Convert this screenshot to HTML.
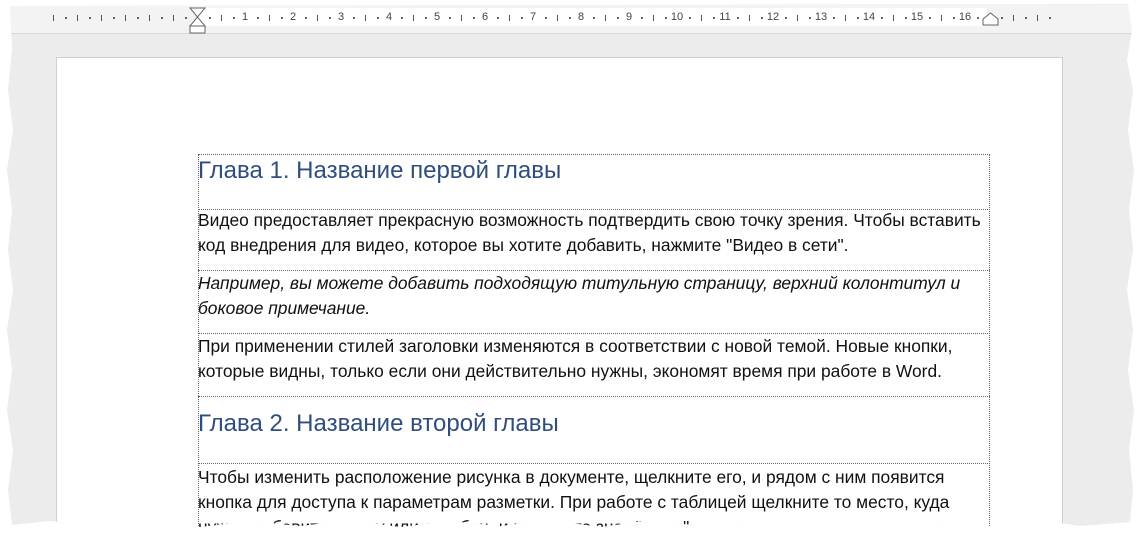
<!DOCTYPE html>
<html><head><meta charset="utf-8"><style>
html,body{margin:0;padding:0;background:#fff;width:1140px;height:540px;overflow:hidden}
#wrap{position:absolute;left:0;top:0;width:1140px;height:540px;background:#ececec;
clip-path:polygon(10px 6px,1128px 4px,1132px 30px,1127px 60px,1133px 90px,1128px 130px,1134px 170px,1129px 210px,1133px 250px,1127px 290px,1133px 330px,1128px 370px,1134px 410px,1129px 450px,1133px 490px,1130px 522px,1080px 526px,1040px 520px,1000px 527px,950px 521px,900px 526px,850px 520px,800px 527px,750px 521px,700px 526px,650px 520px,600px 527px,550px 520px,500px 526px,450px 521px,400px 527px,350px 520px,300px 526px,250px 521px,200px 527px,150px 520px,100px 526px,50px 521px,12px 525px,8px 490px,13px 450px,7px 410px,12px 370px,7px 330px,13px 290px,8px 250px,12px 210px,7px 170px,13px 130px,8px 90px,12px 50px)}
#ruler{position:absolute;left:0;top:5px;width:1140px;height:28px;background:#f3f3f3;border-bottom:1px solid #d8d8d8}
#rw{position:absolute;left:197px;top:8px;width:790px;height:18px;background:#fff}
.n{position:absolute;top:11px;font:11px "Liberation Sans",sans-serif;color:#444;transform:translateX(-50%)}
.b{position:absolute;top:15px;width:1px;height:6px;background:#555}
.d{position:absolute;top:17px;width:2px;height:2px;background:#666}
#page{position:absolute;left:56px;top:57px;width:1005px;height:500px;background:#fff;border:1px solid #d0d0d0}
.row{position:absolute;left:198px;width:792px;border-top:1px dotted #666;box-sizing:border-box}
.tb{position:absolute;left:198px;top:154px;width:792px;height:400px;border-left:1px dotted #666;border-right:1px dotted #666;box-sizing:border-box}
.h{font:24px "Liberation Sans","DejaVu Sans",sans-serif;color:#2f4e7e;white-space:nowrap;position:absolute;left:0}
.t{font:17.4px/25px "Liberation Sans","DejaVu Sans",sans-serif;color:#111;white-space:nowrap;position:absolute;left:0}
</style></head><body>
<div id="wrap">
<div id="ruler"></div>
<div id="rw"></div>
<div id="rl"></div>
<div id="page"></div>
<div class="tb"></div>
<div class="row" style="top:154px"><div class="h" style="top:2px">Глава 1. Название первой главы</div></div>
<div class="row" style="top:209px"><div class="t" style="top:-2px">Видео предоставляет прекрасную возможность подтвердить свою точку зрения. Чтобы вставить<br>код внедрения для видео, которое вы хотите добавить, нажмите "Видео в сети".</div></div>
<div class="row" style="top:270px"><div class="t" style="top:0px;font-style:italic">Например, вы можете добавить подходящую титульную страницу, верхний колонтитул и<br>боковое примечание.</div></div>
<div class="row" style="top:333px"><div class="t" style="top:0px">При применении стилей заголовки изменяются в соответствии с новой темой. Новые кнопки,<br>которые видны, только если они действительно нужны, экономят время при работе в Word.</div></div>
<div class="row" style="top:396px"><div class="h" style="top:13px">Глава 2. Название второй главы</div></div>
<div class="row" style="top:463px"><div class="t" style="top:1px">Чтобы изменить расположение рисунка в документе, щелкните его, и рядом с ним появится<br>кнопка для доступа к параметрам разметки. При работе с таблицей щелкните то место, куда<br>нужно добавить строку или столбец, и щелкните знак "плюс".</div></div>
<svg style="position:absolute;left:188px;top:7px" width="20" height="28"><path d="M2 1H17L9.5 10ZM9.5 10L2 19H17Z" fill="#fff" stroke="#666"/><rect x="2" y="19" width="15" height="7" fill="#fff" stroke="#666"/></svg>
<svg style="position:absolute;left:981px;top:11px" width="20" height="16"><path d="M2 14V8L9.5 2L17 8V14Z" fill="#fff" stroke="#666"/></svg>
</div>
<script>
var h='';
for(var k=-3;k<=18;k++){var x=197+48*k;
 if(k>=1&&k<=16)h+='<div class="n" style="left:'+x+'px">'+k+'</div>';
 else if(k!==0&&k<=17)h+='<div class="b" style="left:'+x+'px"></div>';
 [12,36].forEach(function(o){var xx=x+o;if(xx>50&&xx<1052&&Math.abs(xx-990)>6)h+='<div class="d" style="left:'+xx+'px"></div>';});
 if(x+24>50&&x+24<1052&&Math.abs(x+24-990)>6)h+='<div class="b" style="left:'+(x+24)+'px"></div>';
}
document.getElementById('rl').innerHTML=h;
</script>
</body></html>
